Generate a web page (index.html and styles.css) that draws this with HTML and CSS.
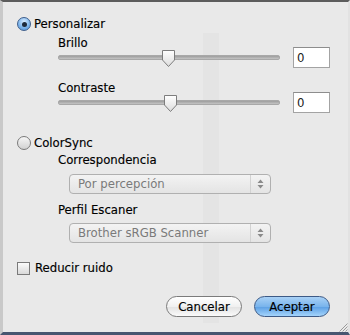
FILE: index.html
```html
<!DOCTYPE html>
<html>
<head>
<meta charset="utf-8">
<link rel="stylesheet" href="styles.css">
</head>
<body>
<div class="sheet">
  <div class="ghost ghost-col"></div>
  <div class="content">
    <div class="radio-row first">
      <span class="radio on"><span class="dot"></span></span>
      <span class="lbl">Personalizar</span>
    </div>
    <div class="group">
      <div class="sub">Brillo</div>
      <div class="slider-row">
        <div class="slider">
          <div class="track"></div>
          <svg class="thumb" style="left:103px" width="15" height="19" viewBox="0 0 15 19"><defs><linearGradient id="tg" x1="0" y1="0" x2="0" y2="1"><stop offset="0" stop-color="#ffffff"/><stop offset="1" stop-color="#dcdcdc"/></linearGradient></defs><path d="M1.5 1.5 H13.5 V11 L7.5 17.5 L1.5 11 Z" fill="url(#tg)" stroke="#7d7d7d" stroke-width="1"/></svg>
        </div>
        <div class="num">0</div>
      </div>
      <div class="sub second">Contraste</div>
      <div class="slider-row">
        <div class="slider">
          <div class="track"></div>
          <svg class="thumb" style="left:105px" width="15" height="19" viewBox="0 0 15 19"><path d="M1.5 1.5 H13.5 V11 L7.5 17.5 L1.5 11 Z" fill="url(#tg)" stroke="#7d7d7d" stroke-width="1"/></svg>
        </div>
        <div class="num">0</div>
      </div>
    </div>
    <div class="radio-row cs">
      <span class="radio"></span>
      <span class="lbl">ColorSync</span>
    </div>
    <div class="group">
      <div class="sub corr">Correspondencia</div>
      <div class="select">
        <span class="sel-text">Por percepción</span>
        <span class="arrows"><svg width="7" height="10" viewBox="0 0 7 10"><path d="M3.5 0.5 L6.5 4 H0.5 Z M0.5 6 H6.5 L3.5 9.5 Z" fill="#8a8a8a"/></svg></span>
      </div>
      <div class="sub third">Perfil Escaner</div>
      <div class="select s2">
        <span class="sel-text">Brother sRGB Scanner</span>
        <span class="arrows"><svg width="7" height="10" viewBox="0 0 7 10"><path d="M3.5 0.5 L6.5 4 H0.5 Z M0.5 6 H6.5 L3.5 9.5 Z" fill="#8a8a8a"/></svg></span>
      </div>
    </div>
    <div class="check-row">
      <span class="check"></span>
      <span class="lbl">Reducir ruido</span>
    </div>
    <div class="buttons">
      <span class="btn">Cancelar</span>
      <span class="btn primary">Aceptar</span>
    </div>
  </div>
  <svg class="grip" width="9" height="9" viewBox="0 0 9 9"><path d="M8.5 0.5 L0.5 8.5 M8.5 3.5 L3.5 8.5 M8.5 6.5 L6.5 8.5" stroke="#9a9a9a" stroke-width="1"/></svg>
</div>
</body>
</html>
```
FILE: styles.css
```css
html, body {
  margin: 0;
  padding: 0;
}
body {
  width: 350px;
  height: 335px;
  overflow: hidden;
  background: #e8e8e8;
  font-family: "DejaVu Sans Condensed", "DejaVu Sans", "Liberation Sans", sans-serif;
  font-size: 13px;
  color: #000;
  -webkit-text-stroke: 0.15px #000;
}
.sheet {
  position: relative;
  width: 350px;
  height: 335px;
  box-sizing: border-box;
  border-top: 2px solid #5c5c5c;
  border-left: 3px solid #c9c9c9;
  border-right: 2px solid #e2e2e2;
  border-bottom: 3px solid #485670;
  background: #e9e9e9;
}
.ghost-col {
  position: absolute;
  left: 200px;
  top: 31px;
  width: 16px;
  height: 290px;
  background: #e4e4e4;
}
.content {
  position: relative;
  padding: 13px 0 0 14px;
}
.radio-row {
  display: flex;
  align-items: center;
  height: 18px;
}
.radio {
  box-sizing: border-box;
  width: 14px;
  height: 14px;
  border-radius: 50%;
  border: 1px solid #7a7a7a;
  background: linear-gradient(#f6f6f6, #d2d2d2);
  display: flex;
  align-items: center;
  justify-content: center;
  margin-right: 3px;
}
.radio.on {
  border-color: #3e5f8c;
  background: radial-gradient(circle at 50% 30%, #d6ebff 0%, #7fb6ec 55%, #4f8fd3 100%);
}
.dot {
  width: 5px;
  height: 5px;
  border-radius: 50%;
  background: #1d2a3a;
}
.lbl {
  line-height: 18px;
}
.group {
  padding-left: 41px;
}
.sub {
  line-height: 13px;
  margin-top: 3px;
}
.sub.second {
  margin-top: 14px;
}
.sub.corr {
  margin-top: 1px;
}
.sub.third {
  margin-top: 9px;
}
.slider-row {
  display: flex;
  align-items: center;
  height: 20px;
  margin-top: -2px;
}
.slider {
  position: relative;
  width: 222px;
  height: 20px;
}
.track {
  position: absolute;
  left: 0;
  right: 0;
  top: 8px;
  height: 3px;
  border-radius: 2px;
  background: linear-gradient(#9d9d9d, #c4c4c4);
  border: 1px solid #a8a8a8;
}
.thumb {
  position: absolute;
  top: 2px;
}
.num {
  box-sizing: border-box;
  margin-left: 13px;
  width: 37px;
  height: 21px;
  background: #fff;
  border: 1px solid #a3a3a3;
  border-top-color: #8d8d8d;
  padding-left: 3px;
  line-height: 19px;
  -webkit-text-stroke: 0;
  color: #222;
}
.radio-row.cs {
  margin-top: 22px;
}
.select {
  box-sizing: border-box;
  margin-left: 11px;
  margin-top: 8px;
  width: 202px;
  height: 20px;
  border: 1px solid #b0b0b0;
  border-radius: 4px;
  background: linear-gradient(#f3f3f3, #e4e4e4);
  display: flex;
  align-items: center;
  justify-content: space-between;
}
.select.s2 {
  margin-top: 7px;
}
.sel-text {
  color: #7a7a7a;
  -webkit-text-stroke: 0;
  padding-left: 8px;
  line-height: 18px;
}
.arrows {
  height: 18px;
  width: 19px;
  border-left: 1px solid #d2d2d2;
  display: flex;
  align-items: center;
  justify-content: center;
}
.check-row {
  display: flex;
  align-items: center;
  margin-top: 16px;
  height: 18px;
}
.check {
  box-sizing: border-box;
  width: 13px;
  height: 13px;
  border: 1px solid #7a7a7a;
  background: linear-gradient(#fbfbfb, #d9d9d9);
  margin-right: 5px;
}
.buttons {
  display: flex;
  justify-content: flex-end;
  gap: 12px;
  margin-top: 19px;
  margin-right: 18px;
}
.btn {
  box-sizing: border-box;
  width: 76px;
  height: 21px;
  border-radius: 11px;
  border: 1px solid #7b7b7b;
  background: linear-gradient(#ffffff, #f0f0f0 50%, #e2e2e2 51%, #fafafa);
  text-align: center;
  line-height: 19px;
}
.btn.primary {
  border-color: #3d5a86;
  background: linear-gradient(#a9d1f6, #79b4ec 50%, #5a9ee4 51%, #a4d4fb);
}
.grip {
  position: absolute;
  right: 0;
  bottom: 0;
}
```
